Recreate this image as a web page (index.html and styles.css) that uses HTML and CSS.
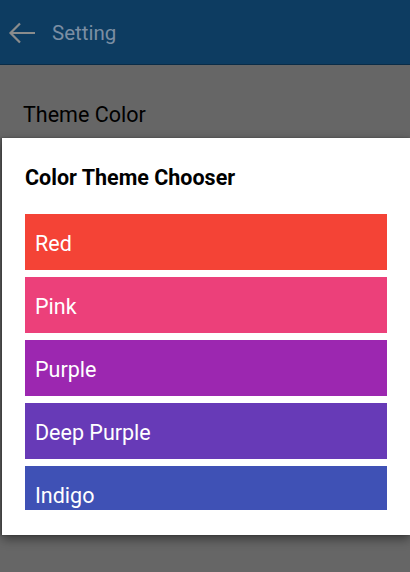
FILE: index.html
```html
<!DOCTYPE html>
<html>
<head>
<meta charset="utf-8">
<link rel="stylesheet" href="styles.css">
</head>
<body>
<div class="app">
  <header class="toolbar">
    <svg class="back" width="28" height="24" viewBox="0 0 28 24">
      <path d="M27 12H2.5M12 2.5L2.5 12l9.5 9.5" fill="none" stroke="#8a8c8c" stroke-width="2.2" stroke-linecap="butt" stroke-linejoin="miter"/>
    </svg>
    <span class="title">Setting</span>
  </header>
  <main class="content">
    <div class="pref">Theme Color</div>
  </main>
  <div class="dialog">
    <h2 class="dialog-title">Color Theme Chooser</h2>
    <div class="list">
      <div class="item red">Red</div>
      <div class="item pink">Pink</div>
      <div class="item purple">Purple</div>
      <div class="item deep-purple">Deep Purple</div>
      <div class="item indigo">Indigo</div>
    </div>
  </div>
</div>
</body>
</html>
```
FILE: styles.css
```css
html, body {
  margin: 0;
  padding: 0;
  height: 100%;
}
body {
  font-family: Roboto, "Noto Sans", sans-serif;
  background: #666666;
}
.app {
  position: relative;
  height: 572px;
  overflow: hidden;
  background: #666666;
}
.toolbar {
  height: 64px;
  background: #0d3c61;
  border-bottom: 1px solid #0a2c47;
  display: flex;
  align-items: center;
  padding-left: 8px;
  gap: 16px;
  box-sizing: content-box;
}
.back {
  display: block;
  margin-top: 2px;
}
.toolbar .title {
  color: #7b8ea3;
  font-size: 20.5px;
  margin-top: 1px;
}
.content {
  padding: 37px 23px 0;
}
.pref {
  font-size: 21.5px;
  line-height: 26px;
  color: #000;
}
.dialog {
  position: absolute;
  left: 2px;
  top: 138px;
  width: 408px;
  height: 397px;
  box-sizing: border-box;
  background: #fff;
  padding: 26px 23px 25px;
  box-shadow: 0 4px 10px rgba(0, 0, 0, 0.45), -1px 0 2px rgba(0,0,0,0.3);
  display: flex;
  flex-direction: column;
}
.dialog-title {
  margin: 0 0 22px;
  font-size: 21.5px;
  line-height: 28px;
  font-weight: 700;
  color: #000;
}
.list {
  flex: 1;
  overflow: hidden;
  display: flex;
  flex-direction: column;
  gap: 7px;
}
.item {
  flex: 0 0 56px;
  box-sizing: border-box;
  display: flex;
  align-items: center;
  padding: 3px 0 0 10px;
  color: #fff;
  font-size: 21.5px;
}
.red { background: #f44336; }
.pink { background: #ec407a; }
.purple { background: #9c27b0; }
.deep-purple { background: #673ab7; }
.indigo { background: #3f51b5; }
```
